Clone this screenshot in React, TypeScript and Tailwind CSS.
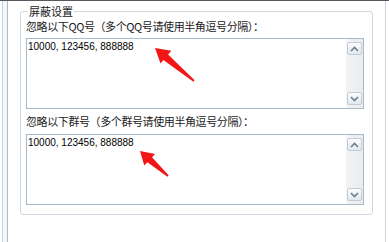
const cjk = { fontFamily: '"Noto Sans CJK SC", "Noto Sans", sans-serif' }

function ScrollButton({ dir }: { dir: "up" | "down" }) {
  return (
    <div className="w-[15px] h-[13px] border border-[#c3cbd6] rounded-[2px] bg-gradient-to-b from-[#fbfcfd] to-[#e4e8ee] flex items-center justify-center">
      <svg width="9" height="6" viewBox="0 0 9 6">
        <path
          d={dir === "up" ? "M1 5 L4.5 1.5 L8 5" : "M1 1 L4.5 4.5 L8 1"}
          fill="none"
          stroke="#6f7c8d"
          strokeWidth="1.6"
        />
      </svg>
    </div>
  )
}

function TextBox({ value }: { value: string }) {
  return (
    <div className="flex h-[71px] border border-[#a9b8cb] bg-white">
      <textarea
        readOnly
        value={value}
        className="flex-1 resize-none overflow-hidden outline-none pl-[1px] pt-[2px] text-[10px] leading-[12px] text-black"
        style={{ fontFamily: '"Liberation Sans", Arial, sans-serif' }}
      />
      <div className="w-[17px] flex flex-col items-center justify-between py-[3px] bg-gradient-to-r from-[#f3f4f6] to-[#e9ebee]">
        <ScrollButton dir="up" />
        <ScrollButton dir="down" />
      </div>
    </div>
  )
}

export default function App() {
  return (
    <div className="relative w-[389px] h-[242px] bg-white flex border-t border-[#55595f] overflow-hidden">
      {/* left window frame */}
      <div className="flex h-full shrink-0">
        <div className="w-[2px] bg-white" />
        <div className="w-[1px] bg-[#c6d3e3]" />
        <div className="w-[4px] bg-[#f5f8fb]" />
        <div className="w-[1px] bg-[#aeb9c8]" />
        <div className="w-[1px] bg-white" />
      </div>

      <div className="ml-[11px] mt-[10px] w-[353px] shrink-0">
        <div className="relative h-[204px] border border-[#d0d9e2] rounded-[3px] pl-[5px] pr-[8px] pt-[8px]">
          <span
            className="absolute -top-[8px] left-[7px] bg-white px-[1px] text-[11px] leading-[14px] text-[#1a1a1a]"
            style={cjk}
          >
            屏蔽设置
          </span>
          <div className="text-[11px] leading-[13px] tracking-[-0.4px] text-[#1a1a1a] whitespace-nowrap" style={cjk}>
            忽略以下QQ号（多个QQ号请使用半角逗号分隔）：
          </div>
          <div className="mt-[5px]">
            <TextBox value="10000, 123456, 888888" />
          </div>
          <div className="mt-[6px] text-[11px] leading-[13px] tracking-[-0.4px] text-[#1a1a1a] whitespace-nowrap" style={cjk}>
            忽略以下群号（多个群号请使用半角逗号分隔）：
          </div>
          <div className="mt-[6px]">
            <TextBox value="10000, 123456, 888888" />
          </div>
        </div>
      </div>

      {/* right window frame */}
      <div className="ml-[12px] flex h-full shrink-0">
        <div className="w-[1px] bg-[#c9d3df]" />
        <div className="w-[4px] bg-white" />
      </div>

      {/* red annotation arrows */}
      <svg className="absolute left-0 top-0 pointer-events-none" width="389" height="242" viewBox="0 0 389 242">
        <polygon
          points="155,47 171.3,49.8 168.1,53.6 194.6,79.2 193.4,80.8 163.4,59 160.5,62.4"
          fill="#f31616"
        />
        <polygon
          points="140,150 155.1,152.9 152,156.2 168.6,174.3 167.4,175.7 147.4,161.3 144.3,164.6"
          fill="#f31616"
        />
      </svg>
    </div>
  )
}
